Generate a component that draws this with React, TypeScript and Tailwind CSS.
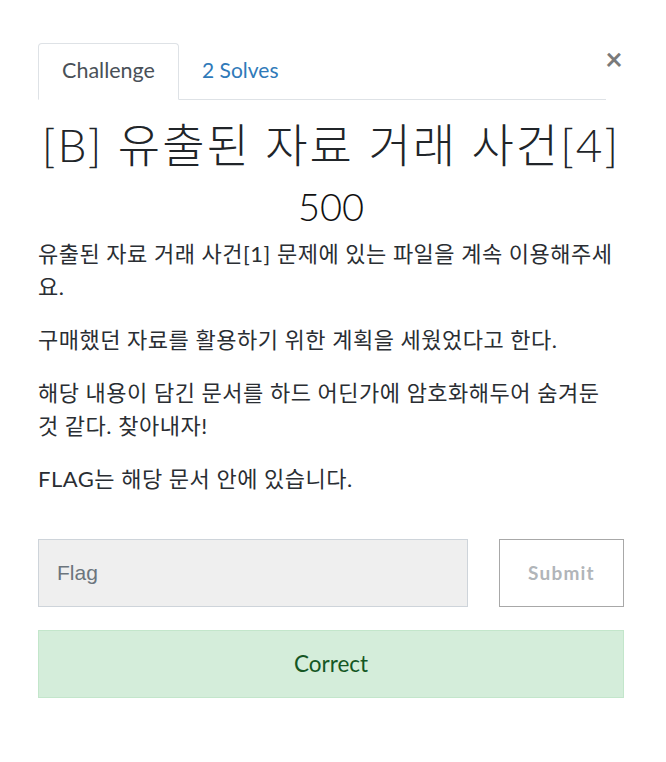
import React from 'react';

const FONT = { fontFamily: 'Lato, "Noto Sans CJK KR", sans-serif' };

export default function App() {
  return (
    <div className="w-[666px] h-[762px] bg-white text-[#212529]" style={FONT}>
      <div className="ml-[38px] w-[586px] pt-[43px]">
        {/* Tabs row */}
        <div className="flex items-start">
          <div className="flex flex-1 border-b border-[#dee2e6]">
            <div className="w-[141px] h-[57px] -mb-px pb-[2px] flex items-center justify-center border border-[#dee2e6] border-b-white rounded-t-[4px] bg-white text-[21.5px] text-[#495057]">
              Challenge
            </div>
            <div className="h-[56px] pb-[2px] pl-[23px] flex items-center text-[21px] text-[#2f7ab9]">2 Solves</div>
          </div>
          <button className="w-[20px] ml-[-2px] mt-0 text-[30px] leading-[30px] font-bold text-[#7a7a7a]">×</button>
        </div>

        {/* Title */}
        <h3 className="mt-[20px] text-center text-[46px] leading-[50px] font-light tracking-[2px] whitespace-nowrap">
          [B] 유출된 자료 거래 사건[4]
        </h3>
        <h4 className="mt-[12px] text-center text-[38px] leading-[48px] font-light text-[#111]">500</h4>

        {/* Description */}
        <div className="mt-[7px] text-[22px] leading-[33px] tracking-[0.5px] text-[#2a2e33]">
          <p className="mb-[20px]">유출된 자료 거래 사건[1] 문제에 있는 파일을 계속 이용해주세요.</p>
          <p className="mb-[20px]">구매했던 자료를 활용하기 위한 계획을 세웠었다고 한다.</p>
          <p className="mb-[20px]">해당 내용이 담긴 문서를 하드 어딘가에 암호화해두어 숨겨둔 것 같다. 찾아내자!</p>
          <p>FLAG는 해당 문서 안에 있습니다.</p>
        </div>

        {/* Input row */}
        <div className="flex mt-[44px] gap-[31px]">
          <input
            placeholder="Flag"
            className="w-[430px] h-[68px] px-[18px] bg-[#efefef] border border-[#ced4da] text-[21px] placeholder:text-[#6c757d] outline-none"
            style={{ fontFamily: '"Liberation Sans", Arial, sans-serif' }}
          />
          <button className="flex-1 h-[68px] border border-[#a8a8a8] bg-white text-[19px] font-bold tracking-[1.2px] text-[#b1b5b9]">
            Submit
          </button>
        </div>

        {/* Result */}
        <div className="mt-[23px] h-[68px] flex items-center justify-center bg-[#d4edda] border border-[#c3e6cb] text-[22.5px] text-[#155724]">
          Correct
        </div>
      </div>
    </div>
  );
}
